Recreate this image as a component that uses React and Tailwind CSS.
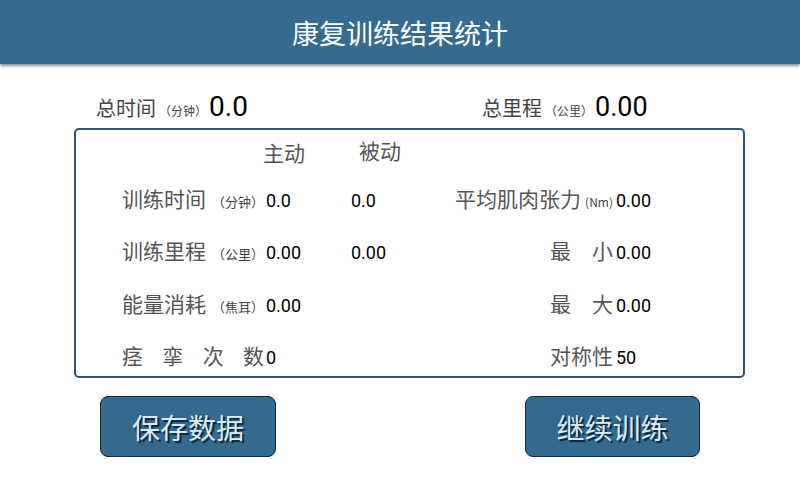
const cjk = { fontFamily: '"Noto Sans CJK SC", "Noto Sans", sans-serif' };
const num = { fontFamily: 'Roboto, "Liberation Sans", sans-serif' };

function Unit({ children }) {
  return <span className="text-[13px] text-[#444]">{children}</span>;
}

function Val({ children, className = '' }) {
  return (
    <span className={`text-[18px] text-black ${className}`} style={num}>
      {children}
    </span>
  );
}

function Row({ label, unit, v1, v2, right, rightUnit, rv, h = 'h-[52px]' }) {
  return (
    <div className={`flex items-center ${h}`}>
      <div className="flex items-baseline">
        <div className="w-[142px] flex items-baseline justify-between">
          {label}
          {unit && <Unit>{unit}</Unit>}
        </div>
        <Val className="ml-[2px] w-[85px]">{v1}</Val>
        <Val className="w-[89px]">{v2}</Val>
        <div className="w-[173px] flex items-baseline justify-end">
          {right}
          {rightUnit && <span className="ml-[4px] text-[12px] text-[#444]">{rightUnit}</span>}
        </div>
        <Val className="ml-[3px]">{rv}</Val>
      </div>
    </div>
  );
}

function Label({ children }) {
  return <span className="text-[21px] leading-none text-[#555]">{children}</span>;
}

export default function App() {
  return (
    <div className="w-[800px] h-[480px] bg-white overflow-hidden relative" style={cjk}>
      <div className="h-[64px] bg-[#346b8e] flex items-center justify-center shadow-[0_2px_3px_rgba(0,0,0,0.45)] relative z-10">
        <span className="text-[27px] text-white leading-none">康复训练结果统计</span>
      </div>

      <div className="h-[64px] flex items-end pb-[7px] pl-[96px]">
        <div className="flex items-baseline w-[386px]">
          <span className="text-[20px] text-[#444] leading-none">总时间</span>
          <span className="text-[12px] text-[#444] ml-[3px] mr-[2px]">（分钟）</span>
          <span className="text-[28px] text-black leading-none" style={num}>0.0</span>
        </div>
        <div className="flex items-baseline">
          <span className="text-[20px] text-[#444] leading-none">总里程</span>
          <span className="text-[12px] text-[#444] ml-[3px] mr-[2px]">（公里）</span>
          <span className="text-[27px] text-black leading-none" style={num}>0.00</span>
        </div>
      </div>

      <div className="ml-[74px] w-[671px] h-[250px] border-2 border-[#2f5470] rounded-[5px] pl-[46px]">
        <div className="h-[44px] flex items-center pl-[141px]">
          <Label>主动</Label>
          <span className="ml-[54px]"><Label>被动</Label></span>
        </div>
        <Row label={<Label>训练时间</Label>} unit="（分钟）" v1="0.0" v2="0.0" right={<Label>平均肌肉张力</Label>} rightUnit="(Nm)" rv="0.00" />
        <Row label={<Label>训练里程</Label>} unit="（公里）" v1="0.00" v2="0.00" right={<Label>最　小</Label>} rv="0.00" />
        <Row label={<Label>能量消耗</Label>} unit="（焦耳）" v1="0.00" h="h-[54px]" right={<Label>最　大</Label>} rv="0.00" />
        <Row
          label={
            <>
              <Label>痉</Label>
              <Label>挛</Label>
              <Label>次</Label>
              <Label>数</Label>
            </>
          }
          v1="0"
          h="h-[50px]"
          right={<Label>对称性</Label>}
          rv="50"
        />
      </div>

      <div className="flex mt-[18px]">
        <button className="ml-[100px] w-[176px] h-[61px] rounded-[8px] bg-[#336a8e] border-[1.5px] border-[#0f2a3d] text-[28px] text-[#dde9f2] [text-shadow:2px_2px_1px_#0d2536]">
          保存数据
        </button>
        <button className="ml-[249px] w-[175px] h-[61px] rounded-[8px] bg-[#336a8e] border-[1.5px] border-[#0f2a3d] text-[28px] text-[#dde9f2] [text-shadow:2px_2px_1px_#0d2536]">
          继续训练
        </button>
      </div>
    </div>
  );
}
